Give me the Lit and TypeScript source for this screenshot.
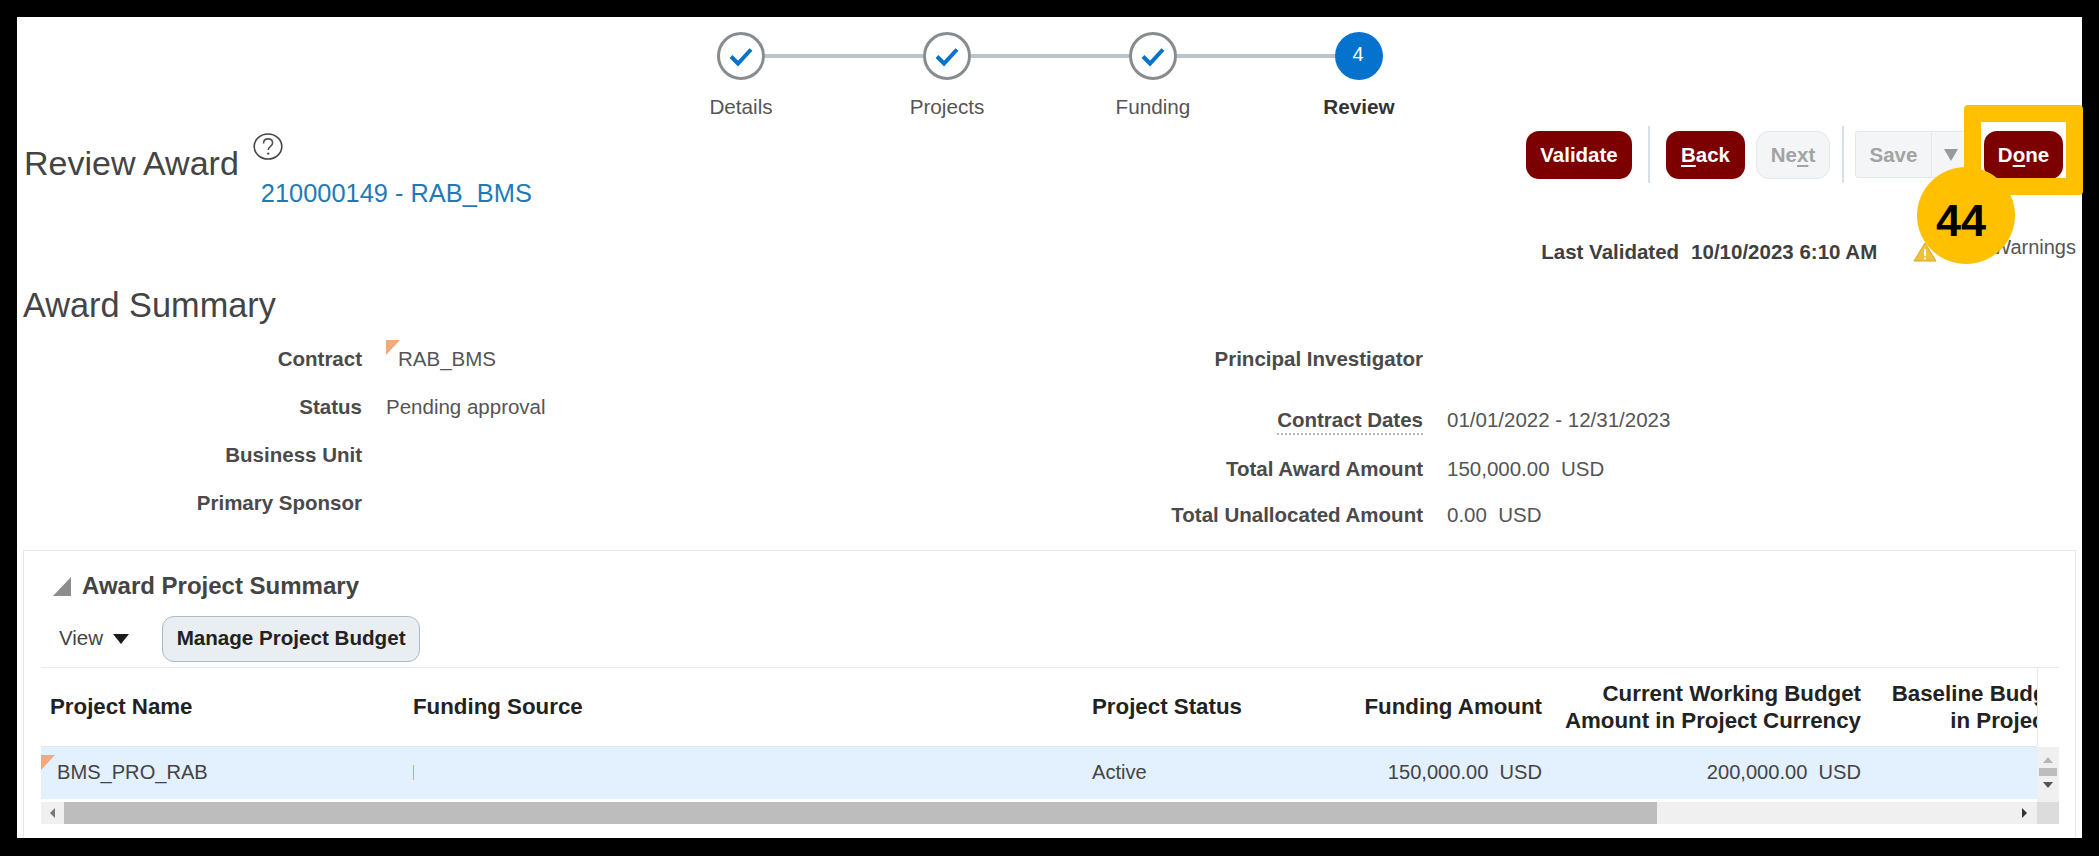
import { LitElement, html, css, svg } from "lit";
import { customElement } from "lit/decorators.js";

const check = svg`<path d="M14 24.500l7 7L34 17.500" fill="none" stroke="#0572ce" stroke-width="4"/>`;

@customElement("app-root")
export class AppRoot extends LitElement {
  static styles = css`
    :host { display: block; width: 2099px; height: 856px; background: #000; padding: 17px 17px 18px; box-sizing: border-box; position: relative; font-family: "Liberation Sans", Arial, sans-serif; color: #4a4a4a; overflow: hidden; }
    .page { background: #fff; height: 821px; width: 2065px; overflow: hidden; }

    .stepper { height: 109px; box-sizing: border-box; padding: 15px 0 0 621px; display: grid; grid-template-columns: repeat(4, 206px); }
    .step { display: flex; flex-direction: column; align-items: stretch; }
    .track { display: flex; align-items: center; height: 48px; }
    .seg { flex: 1; height: 4px; background: #bcc4cb; }
    .seg.none { background: transparent; }
    .circle { width: 48px; height: 48px; box-sizing: border-box; border-radius: 50%; border: 3px solid #878c91; background: #fff; flex: none; position: relative; }
    .circle svg { display: block; margin: -3px; width: 48px; height: 48px; }
    .circle.cur { background: #0572ce; border: 0; color: #fff; font-size: 20px; display: flex; align-items: center; justify-content: center; padding: 0 2px 3px 0; }
    .label { margin-top: 16px; text-align: center; font-size: 20.700px; line-height: 22px; color: #555; }
    .label.cur { font-weight: 700; color: #333; }

    .head { height: 159px; display: flex; justify-content: space-between; }
    .hl { display: flex; align-items: flex-start; padding-left: 7px; }
    .title { font-size: 34px; line-height: 37px; margin-top: 19px; color: #444; }
    .hc { margin-left: 14px; padding-top: 7px; }
    .help { display: block; width: 30px; height: 27px; }
    .link { margin: 18px 0 0 8px; font-size: 25.400px; line-height: 30px; color: #1f7ab8; }
    .hr { display: flex; flex-direction: column; align-items: flex-end; padding-right: 6px; }
    .btns { display: flex; align-items: center; height: 57px; margin-right: 13px; }
    .btn { height: 48px; box-sizing: border-box; display: flex; align-items: center; justify-content: center; border-radius: 13px; font-weight: 700; font-size: 20.500px; background: #7d0000; color: #fff; }
    .validate { width: 106px; }
    .back { width: 79px; }
    .next { width: 74px; margin-left: 11px; background: #f3f5f7; border: 1px solid #e2e7ec; color: #a3a3a3; }
    .done { width: 79px; margin-left: 13px; }
    .sep { width: 2px; height: 57px; background: #d6e0ea; }
    .sep.a { margin: 0 16px 0 16px; }
    .sep.b { margin: 0 11px 0 12px; }
    .save { display: flex; height: 47px; box-sizing: border-box; background: #f3f5f7; border: 1px solid #e2e7ec; border-radius: 3px; color: #a3a3a3; font-weight: 700; font-size: 20.500px; }
    .save span { width: 75px; display: flex; align-items: center; justify-content: center; border-right: 1px solid #e2e7ec; }
    .save i { width: 38px; display: flex; align-items: center; justify-content: center; }
    .tri { width: 0; height: 0; border-left: 7px solid transparent; border-right: 7px solid transparent; border-top: 12px solid #9a9a9a; }
    u { text-underline-offset: 3px; }
    .val { display: flex; align-items: center; margin-top: 57px; height: 24px; font-size: 20.500px; font-weight: 700; color: #3f3f3f; }
    .val b + b { margin-left: 12px; }
    .warn { margin-left: 36px; width: 24px; height: 20px; display: block; }
    .wt { margin: -10px 0 0 55px; font-size: 20px; font-weight: 400; color: #555; }

    h2 { margin: 1px 0 -1px 6px; font-weight: 400; font-size: 34.300px; line-height: 38px; height: 38px; color: #444; }
    .summary { display: grid; grid-template-columns: 1015px 1fr; height: 214px; font-size: 20.500px; }
    .col { display: grid; align-items: center; align-content: start; }
    .col.l { grid-template-columns: 345px 1fr; grid-auto-rows: 48px; padding-top: 12px; column-gap: 24px; }
    .col.r { grid-template-columns: 391px 1fr; grid-template-rows: 72px 50px 48px 44px; column-gap: 24px; }
    .k { text-align: right; font-weight: 700; color: #4a4a4a; }
    .k.dot span { border-bottom: 2px dotted #b5b5b5; padding-bottom: 2px; }
    .v { color: #555; position: relative; }
    .flag { position: relative; padding-left: 12px; }
    .corner { position: absolute; width: 0; height: 0; border-top: 15px solid #f4a97a; border-right: 14px solid transparent; }
    .flag .corner { left: 0; top: -7px; }

    .card { margin: 13px 6px 0; height: 288px; box-sizing: border-box; border: 1px solid #e4e9ee; border-bottom: 0; padding: 20px 16px 0 17px; }
    .ct { display: flex; align-items: center; height: 30px; padding-left: 12px; font-size: 24px; font-weight: 700; color: #444; }
    .ct svg { width: 18px; height: 19px; margin-right: 11px; }
    .tools { display: flex; align-items: center; padding: 15px 0 6px 18px; box-sizing: border-box; height: 67px; border-bottom: 1px solid #e4e9ee; }
    .view { font-size: 20.500px; color: #444; margin-top: -2px; }
    .dn { margin-left: 10px; width: 0; height: 0; border-left: 8px solid transparent; border-right: 8px solid transparent; border-top: 10px solid #1a1a1a; }
    .mpb { margin-left: 33px; width: 258px; height: 46px; box-sizing: border-box; border: 1px solid #a9bbc9; border-radius: 12px; background: #e9eef2; font-weight: 700; font-size: 20.600px; color: #222; display: flex; align-items: center; justify-content: center; padding-bottom: 2px; }

    .tbl { display: grid; grid-template-columns: 1996px 22px; grid-template-rows: 78px 1px 52px 3px 22px; }
    .scroll { grid-column: 1; grid-row: 1 / 4; overflow: hidden; }
    .row { display: grid; grid-template-columns: 363px 679px 217px 252px 319px 295px; width: 2125px; }
    .row > div { box-sizing: border-box; padding: 0 10px 0 9px; display: flex; align-items: center; }
    .hdr { height: 78px; border-bottom: 1px solid #dfe6ed; font-weight: 700; font-size: 22.300px; color: #222; line-height: 27px; box-sizing: content-box; }
    .hdr .n { justify-content: flex-end; text-align: right; }
    .hdr > .one { padding-bottom: 2px; }
    .data { height: 52px; background: #e3f0fd; font-size: 20.100px; color: #444; }
    .data .n { justify-content: flex-end; }
    .data > div { padding-bottom: 1px; }
    .data .first { position: relative; padding-left: 16px; }
    .data .first .corner { left: 0; top: 8px; }
    .tick { width: 1px; height: 15px; background: #c8ab84; }
    .vh { grid-column: 2; grid-row: 1; border-left: 1px solid #e4e9ee; }
    .vs { grid-column: 2; grid-row: 3 / 5; background: #f0f0f0; display: flex; flex-direction: column; align-items: center; padding-top: 10px; box-sizing: border-box; }
    .up { width: 0; height: 0; border-left: 5px solid transparent; border-right: 5px solid transparent; border-bottom: 6px solid #b5b5b5; }
    .thumb { height: 8px; margin: 5px 0 6px; background: #bdbdbd; width: 18px; }
    .down { width: 0; height: 0; border-left: 5px solid transparent; border-right: 5px solid transparent; border-top: 6px solid #555; }
    .hs { grid-column: 1; grid-row: 5; background: #f0f0f0; display: flex; align-items: center; }
    .al { width: 0; height: 0; border-top: 5px solid transparent; border-bottom: 5px solid transparent; border-right: 5px solid #777; margin-left: 9px; }
    .hthumb { width: 1593px; height: 22px; margin-left: 9px; background: #bdbdbd; }
    .ar { width: 0; height: 0; border-top: 5px solid transparent; border-bottom: 5px solid transparent; border-left: 5px solid #333; margin-left: 365px; }
    .corner2 { grid-column: 2; grid-row: 5; background: #dcdcdc; }

    .hl-box { position: absolute; left: 1964px; top: 105px; width: 119px; height: 90px; box-sizing: border-box; border: 17px solid #ffc000; border-radius: 4px; }
    .badge { position: absolute; left: 1917px; top: 167px; width: 98px; height: 97px; box-sizing: border-box; padding: 10px 10px 0 0; border-radius: 50%; background: #ffc000; color: #000; font-weight: 700; font-size: 45px; display: flex; align-items: center; justify-content: center; }
  `;

  private step(label: string, n: number) {
    const cur = n === 4;
    return html`<div class="step">
      <div class="track">
        <div class="seg ${n === 1 ? "none" : ""}"></div>
        ${cur
          ? html`<div class="circle cur">4</div>`
          : html`<div class="circle"><svg viewBox="0 0 48 48">${check}</svg></div>`}
        <div class="seg ${cur ? "none" : ""}"></div>
      </div>
      <div class="label ${cur ? "cur" : ""}">${label}</div>
    </div>`;
  }

  render() {
    return html`<div class="page">
        <div class="stepper">
          ${this.step("Details", 1)}${this.step("Projects", 2)}${this.step("Funding", 3)}${this.step("Review", 4)}
        </div>
        <div class="head">
          <div class="hl">
            <div class="title">Review Award</div>
            <div class="hc">
              <svg class="help" viewBox="0 0 30 27">
                <ellipse cx="15" cy="13.5" rx="13.8" ry="12.5" fill="none" stroke="#444" stroke-width="1.6"/>
                <path d="M10.5 10.5c0-3 2-4.6 4.6-4.6s4.5 1.6 4.5 4c0 3.4-4.4 3.6-4.4 7.2" fill="none" stroke="#555" stroke-width="1.6"/>
                <circle cx="15.2" cy="20.6" r="1.2" fill="#555"/>
              </svg>
              <div class="link">210000149 - RAB_BMS</div>
            </div>
          </div>
          <div class="hr">
            <div class="btns">
              <div class="btn validate">Validate</div>
              <div class="sep a"></div>
              <div class="btn back"><span><u>B</u>ack</span></div>
              <div class="btn next"><span>Ne<u>x</u>t</span></div>
              <div class="sep b"></div>
              <div class="save"><span>Save</span><i><b class="tri"></b></i></div>
              <div class="btn done"><span>D<u>o</u>ne</span></div>
            </div>
            <div class="val">
              <b>Last Validated</b><b>10/10/2023 6:10 AM</b>
              <svg class="warn" viewBox="0 0 24 20"><path d="M12 1L23 19H1z" fill="#f0c23c" stroke="#d9a520"/><path d="M12 7v7M12 15.500v2" stroke="#fff" stroke-width="2"/></svg>
              <span class="wt">Warnings</span>
            </div>
          </div>
        </div>
        <h2>Award Summary</h2>
        <div class="summary">
          <div class="col l">
            <div class="k">Contract</div><div class="v flag"><span class="corner"></span>RAB_BMS</div>
            <div class="k">Status</div><div class="v">Pending approval</div>
            <div class="k">Business Unit</div><div class="v"></div>
            <div class="k">Primary Sponsor</div><div class="v"></div>
          </div>
          <div class="col r">
            <div class="k">Principal Investigator</div><div class="v"></div>
            <div class="k dot"><span>Contract Dates</span></div><div class="v">01/01/2022 - 12/31/2023</div>
            <div class="k">Total Award Amount</div><div class="v">150,000.00&nbsp; USD</div>
            <div class="k">Total Unallocated Amount</div><div class="v">0.00&nbsp; USD</div>
          </div>
        </div>
        <div class="card">
          <div class="ct"><svg viewBox="0 0 18 19"><path d="M18 0V19H0z" fill="#8d8d8d"/></svg>Award Project Summary</div>
          <div class="tools">
            <span class="view">View</span><span class="dn"></span>
            <div class="mpb">Manage Project Budget</div>
          </div>
          <div class="tbl">
            <div class="scroll">
              <div class="row hdr">
                <div class="one">Project Name</div><div class="one">Funding Source</div><div class="one">Project Status</div>
                <div class="n one">Funding Amount</div>
                <div class="n">Current Working Budget<br />Amount in Project Currency</div>
                <div class="n">Baseline Budget Amount<br />in Project Currency</div>
              </div>
              <div class="row data">
                <div class="first"><span class="corner"></span>BMS_PRO_RAB</div>
                <div><span class="tick"></span></div>
                <div>Active</div>
                <div class="n">150,000.00&nbsp; USD</div>
                <div class="n">200,000.00&nbsp; USD</div>
                <div class="n"></div>
              </div>
            </div>
            <div class="vh"></div>
            <div class="vs"><span class="up"></span><span class="thumb"></span><span class="down"></span></div>
            <div class="hs"><span class="al"></span><span class="hthumb"></span><span class="ar"></span></div>
            <div class="corner2"></div>
          </div>
        </div>
      </div>
      <div class="hl-box"></div>
      <div class="badge">44</div>`;
  }
}
